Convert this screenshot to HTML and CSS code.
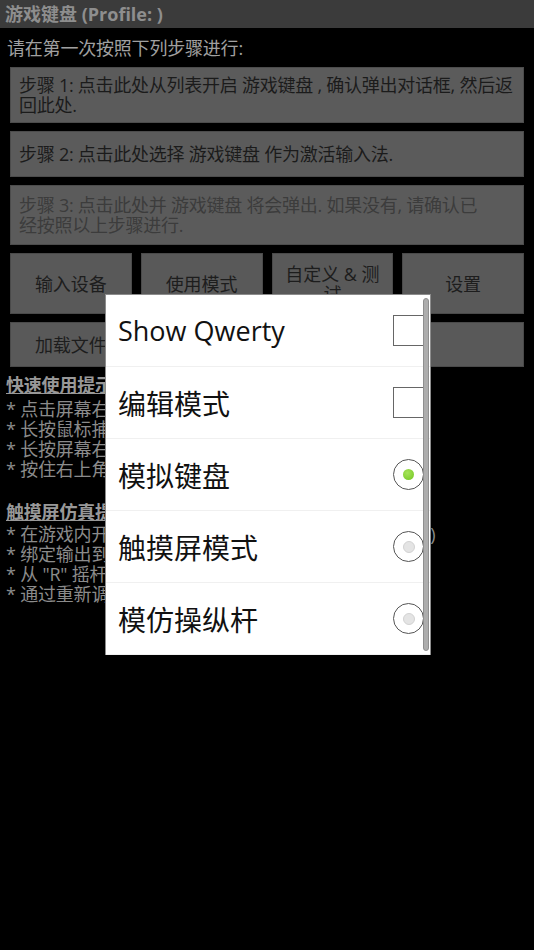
FILE: index.html
```html
<!DOCTYPE html>
<html lang="zh-CN">
<head>
    <meta charset="UTF-8" />
    <meta name="viewport" content="width=device-width, initial-scale=1.0"/>
    <title>游戏键盘</title>
    <link rel="stylesheet" href="styles.css">
</head>
<body>
    <div class="titlebar">游戏键盘 (Profile: )</div>

    <p class="intro">请在第一次按照下列步骤进行:</p>

    <!-- STEPS -->
    <div class="steps">
        <div class="step">步骤 1: 点击此处从列表开启 游戏键盘 , 确认弹出对话框, 然后返<br>回此处.</div>
        <div class="step single">步骤 2: 点击此处选择 游戏键盘 作为激活输入法.</div>
        <div class="step disabled">步骤 3: 点击此处并 游戏键盘 将会弹出. 如果没有, 请确认已<br>经按照以上步骤进行.</div>
    </div>

    <!-- BUTTONS -->
    <div class="actions">
        <div class="btn">输入设备</div>
        <div class="btn">使用模式</div>
        <div class="btn">自定义 &amp; 测试</div>
        <div class="btn">设置</div>
    </div>
    <div class="actions short">
        <div class="btn">加载文件</div>
        <div class="btn wide"></div>
    </div>

    <!-- HINTS -->
    <div class="hints">
        <p class="hint-title">快速使用提示:</p>
        <p>* 点击屏幕右上角的图标可切换模式</p>
        <p>* 长按鼠标捕获图标可锁定鼠标</p>
        <p>* 长按屏幕右下角可打开菜单</p>
        <p>* 按住右上角并滑动可调整透明度</p>
        <p class="hint-title second">触摸屏仿真提示:</p>
        <p>* 在游戏内开启触摸屏仿真模式并选择键位置&nbsp;&nbsp; (见设置)</p>
        <p>* 绑定输出到触摸屏坐标</p>
        <p>* 从 "R" 摇杆控制视角</p>
        <p>* 通过重新调整按键位置来适配游戏</p>
    </div>

    <!-- MODE DIALOG -->
    <div class="popup">
        <div class="option">
            <span class="latin">Show Qwerty</span>
            <span class="check"></span>
        </div>
        <div class="option">
            <span>编辑模式</span>
            <span class="check"></span>
        </div>
        <div class="option">
            <span>模拟键盘</span>
            <span class="radio on"></span>
        </div>
        <div class="option">
            <span>触摸屏模式</span>
            <span class="radio"></span>
        </div>
        <div class="option">
            <span>模仿操纵杆</span>
            <span class="radio"></span>
        </div>
        <div class="scrollbar"></div>
    </div>
</body>
</html>
```

FILE: styles.css
```css
* {
    margin: 0;
    padding: 0;
    box-sizing: border-box;
    font-family: 'Open Sans', 'Noto Sans CJK SC', sans-serif;
}

body {
    background: #000;
    width: 534px;
    height: 950px;
    position: relative;
    overflow: hidden;
}

.titlebar {
    height: 28px;
    line-height: 28px;
    background: #3b3b3b;
    color: #8e8e8e;
    font-size: 18px;
    font-weight: bold;
    padding-left: 5px;
}

.intro {
    color: #a0a0a0;
    font-size: 18px;
    line-height: 22px;
    padding: 9px 7px 0;
    letter-spacing: -0.2px;
}

.steps {
    display: flex;
    flex-direction: column;
    gap: 8px;
    padding: 8px 10px 0;
}

.step {
    background: #5b5b5b;
    border: 1px solid #4c4c4c;
    color: #1b1b1b;
    font-size: 18px;
    line-height: 20px;
    letter-spacing: -0.25px;
    white-space: nowrap;
    padding: 7px 8px;
}

.step.single {
    min-height: 46px;
    display: flex;
    align-items: center;
}

.step.disabled {
    color: #3c3c3c;
    padding: 9px 8px;
}

.actions {
    display: grid;
    grid-template-columns: repeat(4, 1fr);
    gap: 9px;
    padding: 8px 10px 0;
}

.btn {
    height: 61px;
    background: #595959;
    border: 1px solid #4a4a4a;
    color: #1d1d1d;
    font-size: 18px;
    line-height: 20px;
    display: flex;
    align-items: center;
    justify-content: center;
    text-align: center;
    padding: 0 12px;
}

.actions.short .btn {
    height: 45px;
}

.btn.wide {
    grid-column: span 3;
}

.hints {
    padding: 8px 6px 0;
    color: #8b8b8b;
    font-size: 18px;
    line-height: 20px;
    letter-spacing: -0.2px;
}

.hints p {
    white-space: nowrap;
}

.hint-title {
    color: #989898;
    font-weight: bold;
    text-decoration: underline;
    margin-bottom: 4px;
}

.hint-title.second {
    margin-top: 23px;
    margin-bottom: 2px;
}

/* dialog */
.popup {
    position: absolute;
    left: 105px;
    top: 294px;
    width: 326px;
    height: 361px;
    background: #fff;
    border: 1px solid #8c8c8c;
}

.option {
    height: 72px;
    display: flex;
    align-items: center;
    justify-content: space-between;
    padding: 0 6px 0 12px;
    border-bottom: 1px solid #f0f0f0;
    color: #111;
    font-size: 28px;
}

.option:last-of-type {
    height: 71px;
    border-bottom: none;
}

.option .latin {
    font-size: 27px;
}

.check {
    width: 31px;
    height: 31px;
    border: 1.5px solid #666;
}

.radio {
    width: 31px;
    height: 31px;
    border: 1.5px solid #555;
    border-radius: 50%;
    display: flex;
    align-items: center;
    justify-content: center;
}

.radio::after {
    content: "";
    width: 10px;
    height: 10px;
    border-radius: 50%;
    background: #e4e4e4;
    border: 1px solid #d2d2d2;
}

.radio.on::after {
    width: 11px;
    height: 11px;
    background: radial-gradient(circle at 40% 35%, #a6e45a, #72c520);
    border: none;
}

.scrollbar {
    position: absolute;
    right: 1px;
    top: 3px;
    bottom: 3px;
    width: 6px;
    background: #adadad;
    border: 1px solid #8f8f8f;
    border-radius: 3px;
}
```
